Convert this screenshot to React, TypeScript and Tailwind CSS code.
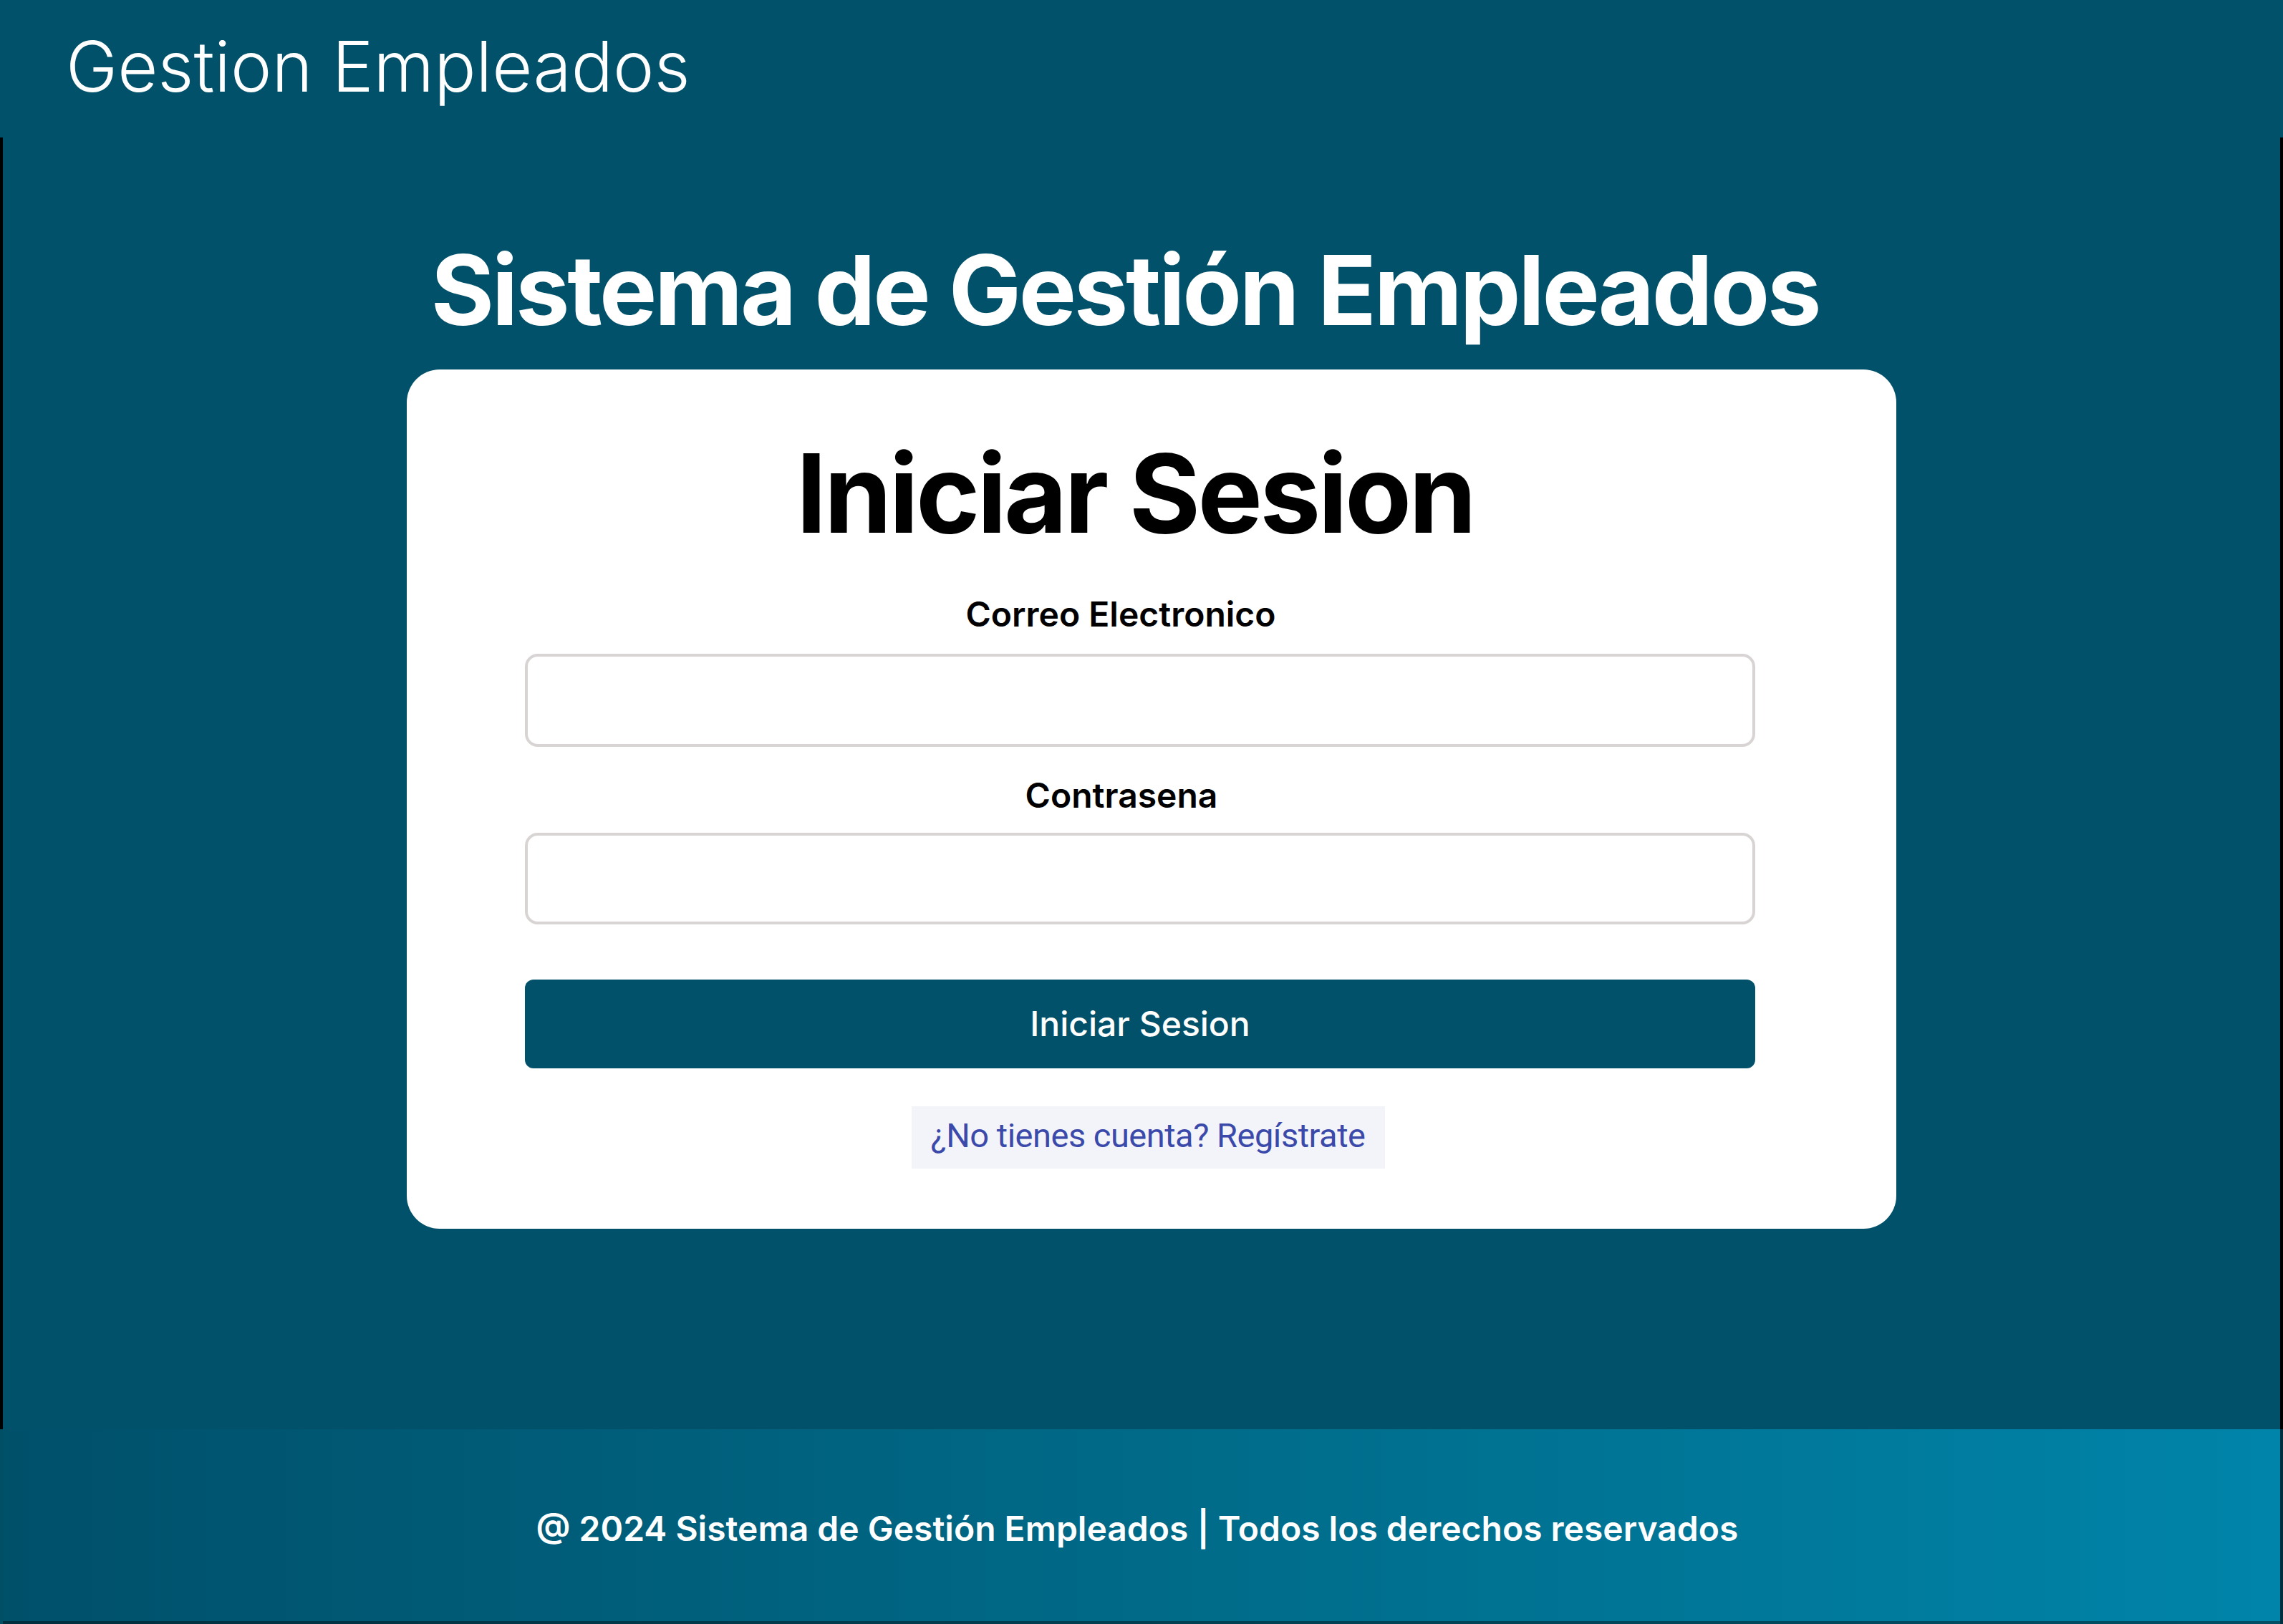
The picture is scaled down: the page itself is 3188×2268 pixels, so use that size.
import { useState } from "react";

const App = () => {
  const [email, setEmail] = useState("");
  const [password, setPassword] = useState("");

  return (
    <div className="flex flex-col h-screen w-full bg-[#01516a] font-['Inter',sans-serif]">
      {/* Header */}
      <header className="h-[192px] shrink-0 pl-[92px] pt-[44px]">
        <h1 className="text-[97px] leading-none font-light text-white">Gestion Empleados</h1>
      </header>

      {/* Main */}
      <main className="flex-1 flex flex-col items-center border-x-4 border-black pt-[146px]">
        <h2 className="text-[135px] leading-none font-bold tracking-[-0.025em] text-white mr-[46px]">
          Sistema de Gestión Empleados
        </h2>

        <div className="mt-[43px] ml-[28px] w-[2080px] h-[1200px] bg-white rounded-[46px] pt-[97px]">
          <div className="w-[1718px] ml-[165px] flex flex-col">
            <h3 className="text-[152px] leading-none font-bold tracking-[-0.025em] text-black text-center mr-[14px]">
              Iniciar Sesion
            </h3>

            <label
              htmlFor="email"
              className="mt-[69px] text-[48px] leading-none font-semibold text-black text-center pr-[54px]"
            >
              Correo Electronico
            </label>
            <input
              id="email"
              type="email"
              value={email}
              onChange={(e) => setEmail(e.target.value)}
              className="mt-[31px] h-[130px] w-full border-4 border-[#d9d4d4] rounded-[18px] px-6 text-[48px] outline-none"
            />

            <label
              htmlFor="password"
              className="mt-[44px] text-[48px] leading-none font-semibold text-black text-center pr-[52px]"
            >
              Contrasena
            </label>
            <input
              id="password"
              type="password"
              value={password}
              onChange={(e) => setPassword(e.target.value)}
              className="mt-[28px] h-[128px] w-full border-4 border-[#d9d4d4] rounded-[18px] px-6 text-[48px] outline-none"
            />

            <button className="mt-[77px] h-[124px] w-full bg-[#01516a] rounded-[12px] text-white text-[48px] font-medium">
              Iniciar Sesion
            </button>

            <div className="mt-[53px] flex justify-center pl-[22px]">
              <a
                href="#"
                className="h-[87px] w-[661px] bg-[#f3f4f9] flex items-center justify-center pb-[4px] text-[47px] text-[#3b4aaa] font-['Roboto',sans-serif] tracking-[-0.5px]"
              >
                ¿No tienes cuenta? Regístrate
              </a>
            </div>
          </div>
        </div>
      </main>

      {/* Footer */}
      <footer className="h-[272px] shrink-0 flex items-center justify-center pt-[10px] pr-[12px] border-x-4 border-b-4 border-black/40 bg-gradient-to-r from-[#00506a] via-[#006a88] to-[#0084a9]">
        <p className="text-[48px] font-semibold text-white">
          @ 2024 Sistema de Gestión Empleados | Todos los derechos reservados
        </p>
      </footer>
    </div>
  );
};

export default App;
